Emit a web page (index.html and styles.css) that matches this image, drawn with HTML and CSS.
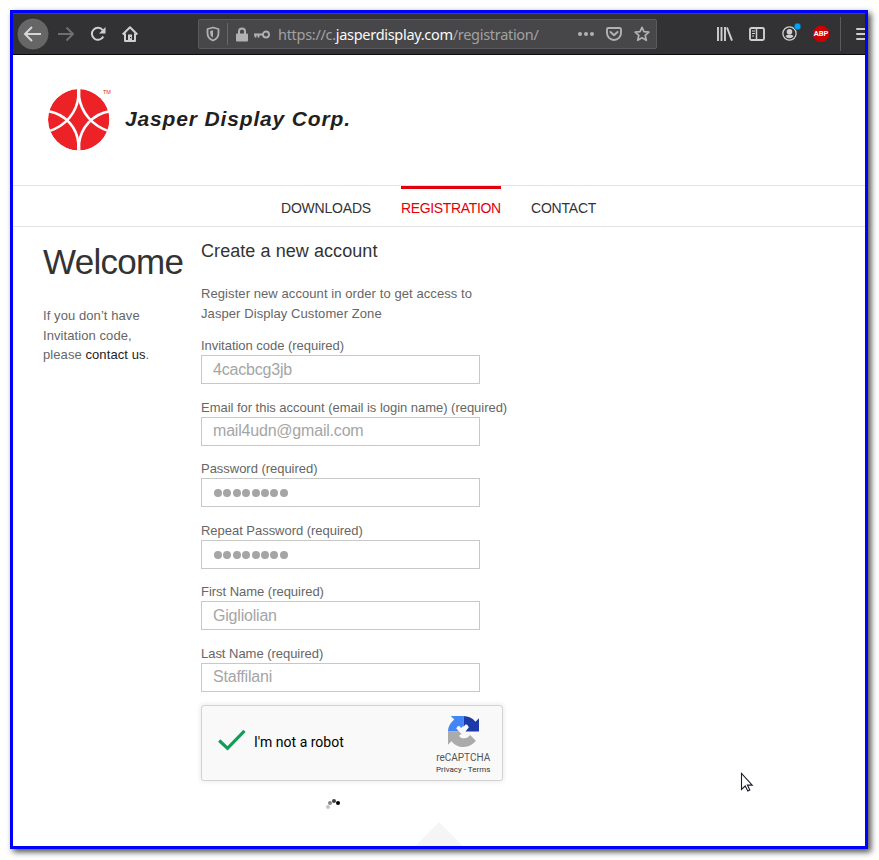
FILE: index.html
```html
<!DOCTYPE html>
<html lang="en">
<head>
<meta charset="utf-8">
<title>Registration</title>
<link rel="stylesheet" href="styles.css">
</head>
<body>
<div class="window">
  <header class="toolbar">
    <div class="nav-buttons">
      <svg class="tb-back" width="34" height="34" viewBox="0 0 34 34"><circle cx="17" cy="17" r="16" fill="#666667" stroke="#1f1f20" stroke-width=".6"/><path d="M25 17H10M16 10L9 17l7 7" fill="none" stroke="#d6d6d7" stroke-width="2"/></svg>
      <svg class="tb-forward" width="18" height="16" viewBox="0 0 18 16"><path d="M1 8h14.500M9.500 1.500L16 8l-6.500 6.500" fill="none" stroke="#6f6f70" stroke-width="2"/></svg>
      <svg class="tb-reload" width="16" height="16" viewBox="0 0 16 16"><path d="M13.300 10.500A6 6 0 1 1 12.700 4.200" fill="none" stroke="#cfcfd0" stroke-width="2"/><path d="M15.500 1v6.500H9z" fill="#cfcfd0"/></svg>
      <svg class="tb-home" width="16" height="16" viewBox="0 0 16 16"><path d="M.7 8.500L8 1.200l7.300 7.300M3 7.500V15h10V7.500" fill="none" stroke="#cfcfd0" stroke-width="2" stroke-linejoin="round"/><path d="M6 8.500h4V15H6z" fill="#cfcfd0"/><path d="M8 11h1.200v1.200H8z" fill="#323234"/></svg>
    </div>
    <div class="urlbar">
      <svg class="ub-shield" width="14" height="16" viewBox="0 0 14 16"><path d="M7 1.500L12.500 3v4c0 4-2 6.300-5.500 7.500C3.500 13.300 1.500 11 1.500 7V3z" fill="none" stroke="#b1b1b3" stroke-width="1.800" stroke-linejoin="round"/><path d="M7 4.200v7.400C5 10.500 4.200 9 4.200 7V5z" fill="#b1b1b3"/></svg>
      <i class="ub-sep"></i>
      <svg class="ub-lock" width="12" height="15" viewBox="0 0 12 15"><path d="M3 8V4.500a3 3 0 0 1 6 0V8" fill="none" stroke="#b1b1b3" stroke-width="2"/><rect y="6.500" width="12" height="8" rx="1" fill="#b1b1b3"/></svg>
      <svg class="ub-key" width="16" height="9" viewBox="0 0 16 9"><circle cx="12" cy="4.500" r="3" fill="none" stroke="#b1b1b3" stroke-width="1.900"/><path d="M9 4.500H0M1.500 4v3.500M4.500 4v3.500" fill="none" stroke="#b1b1b3" stroke-width="1.900"/></svg>
      <span class="url">https://c.<b>jasperdisplay.com</b>/registration/</span>
      <svg class="ub-dots" width="16" height="4" viewBox="0 0 16 4"><g fill="#b1b1b3"><circle cx="2" cy="2" r="2"/><circle cx="8" cy="2" r="2"/><circle cx="14" cy="2" r="2"/></g></svg>
      <svg class="ub-pocket" width="16" height="14" viewBox="0 0 16 14"><path d="M2.200 1h11.600a1.200 1.200 0 0 1 1.200 1.200V6a7 7 0 0 1-14 0V2.200A1.200 1.200 0 0 1 2.200 1z" fill="none" stroke="#b1b1b3" stroke-width="1.900"/><path d="M4.500 5L8 8.300 11.500 5" fill="none" stroke="#b1b1b3" stroke-width="2" stroke-linecap="round" stroke-linejoin="round"/></svg>
      <svg class="ub-star" width="16" height="16" viewBox="0 0 16 16"><path d="M8 1.300l2 4.400 4.900.5-3.700 3.200 1.100 4.900L8 11.800l-4.300 2.500 1.100-4.900L1.100 6.200 6 5.700z" fill="none" stroke="#b1b1b3" stroke-width="1.700" stroke-linejoin="round"/></svg>
    </div>
    <div class="tools">
      <svg class="tl-library" width="16" height="14" viewBox="0 0 16 14"><path d="M1 0v14M4.500 0v14M8 0v14M10 .5L15 13.700" fill="none" stroke="#cfcfd0" stroke-width="1.900"/></svg>
      <svg class="tl-side" width="16" height="14" viewBox="0 0 16 14"><rect x="1" y="1" width="14" height="12" rx="1.500" fill="none" stroke="#cfcfd0" stroke-width="1.900"/><path d="M7.500 1v12" stroke="#cfcfd0" stroke-width="1.500"/><path d="M3 4h3M3 6.500h3M3 9h2" stroke="#cfcfd0"/></svg>
      <svg class="tl-user" width="19" height="18" viewBox="0 0 19 18"><circle cx="7.500" cy="10.500" r="6.600" fill="none" stroke="#cfcfd0" stroke-width="1.300"/><circle cx="7.500" cy="8.700" r="2.800" fill="#cfcfd0"/><path d="M3.500 13.200c.8-1.200 2-1.400 4-1.400s3.200.2 4 1.400c-.9 1.200-2.200 2-4 2s-3.100-.8-4-2z" fill="#cfcfd0"/><circle cx="15.500" cy="3.500" r="3.400" fill="#00a5f8" stroke="#323234" stroke-width=".6"/></svg>
      <span class="tl-abp">ABP</span>
      <i class="tl-sep"></i>
      <span class="tl-menu"><i></i><i></i><i></i></span>
    </div>
  </header>

  <div class="brand">
    <svg class="brand-mark" width="62" height="62" viewBox="0 0 62 62"><defs><clipPath id="disc"><circle cx="30.700" cy="30.800" r="30.700"/></clipPath></defs><g clip-path="url(#disc)"><circle cx="30.700" cy="30.800" r="30.700" fill="#ec2227"/><g fill="none" stroke="#fff" stroke-width="2.600"><path d="M30.300 -1V8C29 22 19 37 -1 43"/><path d="M31.100 -1V8C33 22 43 37 63 43"/><path d="M30.300 63V54C29 40 19 25 -1 22"/><path d="M31.100 63V54C33 40 43 25 63 22"/></g></g></svg>
    <span class="tm">TM</span>
    <span class="brand-name">Jasper Display Corp.</span>
  </div>

  <nav class="menu">
    <a class="m1">DOWNLOADS</a>
    <a class="m2 active">REGISTRATION</a>
    <a class="m3">CONTACT</a>
  </nav>

  <main class="content">
    <aside class="intro">
      <h1>Welcome</h1>
      <p>If you don’t have<br>Invitation code,<br>please <a>contact us</a>.</p>
    </aside>
    <section class="register">
      <h2>Create a new account</h2>
      <p class="lead">Register new account in order to get access to<br>Jasper Display Customer Zone</p>
      <div class="field"><label>Invitation code (required)</label><div class="input">4cacbcg3jb</div></div>
      <div class="field"><label>Email for this account (email is login name) (required)</label><div class="input">mail4udn@gmail.com</div></div>
      <div class="field"><label>Password (required)</label><div class="input dots"><i></i><i></i><i></i><i></i><i></i><i></i><i></i><i></i></div></div>
      <div class="field"><label>Repeat Password (required)</label><div class="input dots"><i></i><i></i><i></i><i></i><i></i><i></i><i></i><i></i></div></div>
      <div class="field"><label>First Name (required)</label><div class="input">Gigliolian</div></div>
      <div class="field"><label>Last Name (required)</label><div class="input">Staffilani</div></div>
      <div class="captcha">
        <svg class="check" width="28" height="22" viewBox="0 0 28 22"><path d="M1.200 11.500L9.500 19.300 26.500 1.800" fill="none" stroke="#0f9d58" stroke-width="3.200"/></svg>
        <span class="robot">I'm not a robot</span>
        <div class="rc">
          <svg width="31" height="31" viewBox="0 0 64 64"><path fill="#1c3aa9" d="M64 32c0-.46-.01-.92-.03-1.370V4.570l-7.200 7.200C50.870 4.550 41.900 0 31.860 0v22l5-5c3 1 5 3 6 6.500L36 32z"/><path fill="#4285f4" d="M31.860.03H5.800l7.200 7.200C5.780 13.130.02 21.900.02 32H23l-6-6c1-3 3-5 6-6l4 5 4.860-5z"/><path fill="#ababab" d="M.02 32v27.200l7.200-7.200C13.120 59.400 22 64 32 64c10.500 0 19.700-5 25.500-12.800L45.700 39.300C42.700 43.500 38 46 34 46c-6 0-10-2-11-6l5-3-5-5z"/></svg>
          <b>reCAPTCHA</b>
          <small>Privacy - Terms</small>
        </div>
      </div>
      <svg class="spinner" width="16" height="12" viewBox="0 0 16 12"><circle cx="3" cy="9" r="2" fill="#c4c4c4"/><circle cx="5" cy="5" r="2" fill="#858585"/><circle cx="9" cy="3" r="2" fill="#444"/><circle cx="13" cy="5" r="2" fill="#000"/></svg>
    </section>
  </main>
  <div class="notch"></div>
  <svg class="cursor" width="14" height="21" viewBox="0 0 14 21"><path d="M1.500 1.500v16l3.700-3.500 2.600 5 2-1-2.400-4.900h4.800z" fill="#fff" stroke="#1c1c2c" stroke-width="1.100"/></svg>
</div>
</body>
</html>
```
FILE: styles.css
```css
* { box-sizing: border-box; }
body { margin: 0; padding: 10px; height: 860px; overflow: hidden; background: #fff; font-family: "Liberation Sans", Arial, sans-serif; color: #666; }
svg { display: block; flex: none; }
.window { position: relative; width: 858px; height: 839px; border: 3px solid #00f; background: #fff; box-shadow: 3px 3px 6px 0 rgba(0,0,0,.7); overflow: hidden; }

.toolbar { display: flex; align-items: center; height: 42px; background: #323234; border-top: 1px solid #1c4f9c; border-bottom: 1px solid #0c0c0d; overflow: hidden; }
.nav-buttons { display: flex; align-items: center; width: 185px; flex: none; padding-left: 3px; }
.tb-forward { margin-left: 7px; }
.tb-reload { margin-left: 15px; }
.tb-home { margin-left: 16px; }
.urlbar { display: flex; align-items: center; flex: none; width: 459px; height: 30px; border: 1px solid #5b5b5d; border-radius: 2px; background: #474749; }
.ub-shield { margin-left: 7px; }
.ub-sep { width: 1px; height: 22px; margin: 0 8px 0 7px; background: #68686a; }
.ub-key { margin-left: 6px; }
.url { width: 300px; margin-left: 8px; font: 14.500px/20px "Noto Sans", sans-serif; letter-spacing: -.3px; color: #a1a1a3; white-space: nowrap; }
.url b { font-weight: 400; color: #fafafa; }
.ub-pocket { margin-left: 12px; }
.ub-star { margin-left: 12px; }
.tools { display: flex; align-items: center; flex: none; margin-left: 60px; }
.tl-side { margin-left: 16px; }
.tl-user { margin: -4px 0 0 17px; }
.tl-abp { display: flex; align-items: center; justify-content: center; width: 16px; height: 16px; margin-left: 12px; background: #c00; clip-path: polygon(30% 0,70% 0,100% 30%,100% 70%,70% 100%,30% 100%,0 70%,0 30%); font: 700 7.500px/16px Roboto, sans-serif; color: #fff; }
.tl-sep { width: 1px; height: 34px; margin: 0 15px 0 11px; background: #5b5b5d; }
.tl-menu { display: flex; flex-direction: column; gap: 3px; width: 16px; }
.tl-menu i { height: 2px; border-radius: 1px; background: #cfcfd0; }

.brand { display: flex; height: 130px; padding: 34px 0 0 35px; }
.tm { width: 15px; margin-left: -7px; font-size: 5.500px; line-height: 6px; color: #ec2227; }
.brand-name { margin-left: 7px; padding-top: 17px; font: italic 700 21px/25px "Liberation Sans", Arial, sans-serif; letter-spacing: .850px; color: #231f20; white-space: nowrap; }

.menu { display: flex; height: 42px; padding-left: 268px; border-top: 1px solid #e2e2e2; border-bottom: 1px solid #e2e2e2; font-size: 14px; line-height: 16px; color: #333; }
.menu a { height: 38px; padding-top: 14px; white-space: nowrap; letter-spacing: -.2px; }
.menu .m1 { width: 90px; }
.menu .m2 { width: 100px; margin: 0 30px; letter-spacing: -.35px; }
.menu .active { padding-top: 11px; border-top: 3px solid #e2000a; color: #e2000a; }

.content { display: flex; height: 619px; padding-left: 30px; font-size: 13px; line-height: 19.600px; }
.intro { flex: none; width: 158px; }
h1 { margin: 15px 0 0; font-size: 35px; font-weight: 400; line-height: 40px; letter-spacing: -.700px; color: #333; }
.intro p { margin: 24px 0 0; letter-spacing: .08px; }
.intro p a { color: #222; }
.register { flex: none; width: 320px; }
h2 { margin: 13px 0 0; font-size: 18px; font-weight: 400; line-height: 22px; letter-spacing: .07px; color: #333; white-space: nowrap; }
.lead { margin: 22px 0 13px; line-height: 20px; white-space: nowrap; letter-spacing: .08px; }
.field { height: 61.600px; }
label { display: block; height: 18px; line-height: 15px; padding-top: 1px; white-space: nowrap; letter-spacing: -.03px; }
.input { display: flex; align-items: center; width: 279px; height: 29px; padding-left: 11px; border: 1px solid #c8c8c8; font-size: 16px; color: #a5a5a5; line-height: 18px; letter-spacing: -.2px; }
.dots { gap: 1.400px; padding: 1px 0 0 12px; }
.dots i { width: 8px; height: 8px; border-radius: 50%; background: #a5a5a5; }
.captcha { display: flex; align-items: center; width: 302px; height: 76px; margin-top: -2px; padding-left: 16px; border: 1px solid #d3d3d3; border-radius: 3px; background: #f9f9f9; box-shadow: 0 0 4px 1px rgba(0,0,0,.08); font-family: Roboto, sans-serif; color: #000; }
.check { margin-top: -6px; }
.robot { width: 171px; margin: -1px 0 0 8px; font-size: 14px; line-height: 17px; }
.rc { display: flex; flex-direction: column; align-items: center; width: 78px; padding-top: 5px; white-space: nowrap; color: #555; }
.rc b { margin-top: 5px; font-size: 10px; font-weight: 400; line-height: 12px; }
.rc small { margin-top: 1px; font-size: 8px; line-height: 10px; color: #333; }
.spinner { margin: 17px 0 0 124px; }
.notch { position: absolute; left: 402px; bottom: 0; width: 48px; height: 24px; background: #f5f5f5; clip-path: polygon(50% 0,100% 100%,0 100%); }
.cursor { position: absolute; left: 727px; top: 759px; }
```
